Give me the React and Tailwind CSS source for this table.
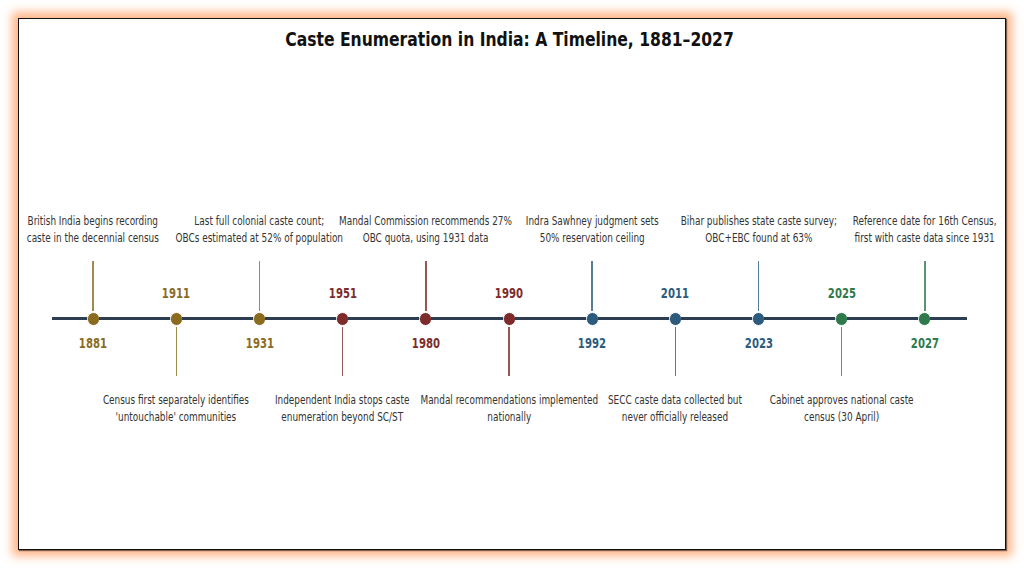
import React from 'react';

const GOLD = { text: 'text-[#8b6b1f]', dot: 'bg-[#8b6b1f]', stem: 'bg-[#8b6b1f]/80' };
const MAROON = { text: 'text-[#7e2b2b]', dot: 'bg-[#7e2b2b]', stem: 'bg-[#7e2b2b]/80' };
const BLUE = { text: 'text-[#2c5b7e]', dot: 'bg-[#2c5b7e]', stem: 'bg-[#2c5b7e]/80' };
const GREEN = { text: 'text-[#2f7a4c]', dot: 'bg-[#2f7a4c]', stem: 'bg-[#2f7a4c]/80' };

const events = [
  { year: '1881', up: true, tone: GOLD, lines: ['British India begins recording', 'caste in the decennial census'] },
  { year: '1911', up: false, tone: GOLD, lines: ['Census first separately identifies', "'untouchable' communities"] },
  { year: '1931', up: true, tone: GOLD, lines: ['Last full colonial caste count;', 'OBCs estimated at 52% of population'] },
  { year: '1951', up: false, tone: MAROON, lines: ['Independent India stops caste', 'enumeration beyond SC/ST'] },
  { year: '1980', up: true, tone: MAROON, lines: ['Mandal Commission recommends 27%', 'OBC quota, using 1931 data'] },
  { year: '1990', up: false, tone: MAROON, lines: ['Mandal recommendations implemented', 'nationally'] },
  { year: '1992', up: true, tone: BLUE, lines: ['Indra Sawhney judgment sets', '50% reservation ceiling'] },
  { year: '2011', up: false, tone: BLUE, lines: ['SECC caste data collected but', 'never officially released'] },
  { year: '2023', up: true, tone: BLUE, lines: ['Bihar publishes state caste survey;', 'OBC+EBC found at 63%'] },
  { year: '2025', up: false, tone: GREEN, lines: ['Cabinet approves national caste', 'census (30 April)'] },
  { year: '2027', up: true, tone: GREEN, lines: ['Reference date for 16th Census,', 'first with caste data since 1931'] },
];

// the source chart was squeezed sideways, so the text runs narrow
const Note = ({ lines }) => (
  <div className="flex justify-center">
    <div className="whitespace-nowrap text-center text-[11.5px] leading-[17px] text-[#333333] scale-x-[0.86]">
      {lines[0]}
      <br />
      {lines[1]}
    </div>
  </div>
);

const Year = ({ ev }) => (
  <div className={`text-center whitespace-nowrap font-bold text-[13.5px] leading-[16px] scale-x-[0.83] ${ev.tone.text}`}>
    {ev.year}
  </div>
);

const Column = ({ ev }) => (
  <div className="flex flex-col">
    {/* text above */}
    <div className="h-[35.5px] pt-[1.5px]">{ev.up && <Note lines={ev.lines} />}</div>
    <div className="h-[14px]" />
    {/* upper area */}
    <div className="h-[50px] flex flex-col items-center justify-end">
      {ev.up ? (
        <div className={`w-[1.5px] h-full ${ev.tone.stem}`} />
      ) : (
        <div className="pb-[10px]"><Year ev={ev} /></div>
      )}
    </div>
    {/* axis row */}
    <div className="h-[16px] flex items-center">
      <div className="flex-1 h-[3px] bg-[#2c3e50]" />
      <div className={`w-[13px] h-[14px] rounded-full border-[1.5px] border-white shrink-0 -mx-[1px] ${ev.tone.dot}`} />
      <div className="flex-1 h-[3px] bg-[#2c3e50]" />
    </div>
    {/* lower area */}
    <div className="h-[49px] flex flex-col items-center">
      {ev.up ? (
        <div className="pt-[8px]"><Year ev={ev} /></div>
      ) : (
        <div className={`w-[1.5px] h-full ${ev.tone.stem}`} />
      )}
    </div>
    <div className="h-[16px]" />
    <div className="h-[34px]">{!ev.up && <Note lines={ev.lines} />}</div>
  </div>
);

const App = () => {
  return (
    <div
      className="w-[1024px] h-[568px] bg-white p-[18px] overflow-hidden font-stretch-condensed"
      style={{ fontFamily: '"DejaVu Sans Condensed", "DejaVu Sans", sans-serif' }}
    >
      <div className="h-full bg-white border-[1.5px] border-[#111] shadow-[1px_1px_1px_rgba(0,0,0,0.5),0_0_9px_6px_rgba(255,150,85,0.7)] pl-[32.5px] pr-[38.5px] pt-[8px]">
        <h1 className="text-center font-bold text-[19px] leading-[24px] text-[#111] scale-x-[0.912]">
          Caste Enumeration in India: A Timeline, 1881–2027
        </h1>
        <div className="mt-[160px] grid grid-cols-11">
          {events.map((ev) => (
            <Column key={ev.year} ev={ev} />
          ))}
        </div>
      </div>
    </div>
  );
};

export default App;
